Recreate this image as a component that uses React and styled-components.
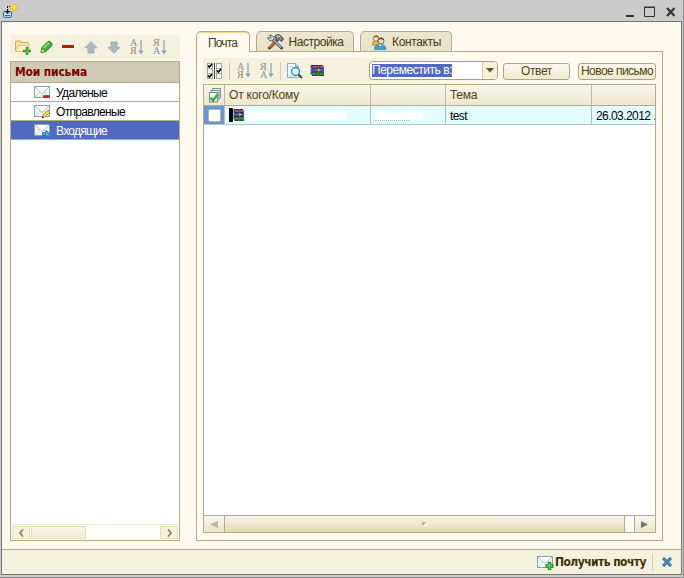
import React from "react";
import styled, { createGlobalStyle } from "styled-components";

const LINE = "#b2ac86";
const CREAM = "#fffaf0";
const BAR = "#f4f1de";

const FOLDERS = [
  { name: "Удаленые", badge: "minus", width: 51 },
  { name: "Отправленые", badge: "pencil", width: 69 },
  { name: "Входящие", badge: "arrow", width: 51, active: true },
];

const TABS = [
  { name: "Почта", width: 54, text: 29, active: true },
  { name: "Настройка", width: 98, text: 55, icon: "tools" },
  { name: "Контакты", width: 92, text: 49, icon: "people" },
];

function Label({ width, children, ...rest }) {
  const ref = React.useRef(null);
  const [spacing, setSpacing] = React.useState(0);

  // spreads the letters so that the caption fills its width
  React.useLayoutEffect(() => {
    const natural = ref.current.getBoundingClientRect().width;
    setSpacing((width - natural) / children.length);
  }, []);

  return (
    <Text ref={ref} style={{ letterSpacing: `${spacing}px` }} {...rest}>
      {children}
    </Text>
  );
}

function AppIcon() {
  return (
    <svg width="16" height="16" viewBox="0 0 16 16">
      <rect x=".5" y="8.500" width="8" height="6" rx="1.500" fill="#b9dcf3" stroke="#2f6c9c" />
      <path d="M2 12.500h5" stroke="#2f6c9c" />
      <path d="M4.500 3v6" stroke="#111" strokeDasharray="2 1" />
      <path d="M4 3.500h4" stroke="#111" strokeDasharray="1 1" />
      <path d="M2 8h5l-2.500 3z" fill="#111" />
      <path d="M11 .5l4 4-4 4-4-4z" fill="#ffd83a" stroke="#d9a51c" strokeWidth=".7" />
    </svg>
  );
}

function FolderIcon() {
  return (
    <svg width="16" height="16" viewBox="0 0 16 16">
      <path d="M.5 12V3q0-1 1-1h3q1 0 1 1v.5h7q1 0 1 1V12z" fill="#f9e5a4" stroke="#d4a951" />
      <path d="M1 12.500l1.800-6h11v6z" fill="#fff1bd" stroke="#dfbd6e" strokeWidth=".8" />
      <path d="M12 8v8M8 12h8" stroke="#2f8a22" strokeWidth="2.600" />
      <path d="M12 8.600v6.800M8.600 12h6.800" stroke="#64c64c" />
    </svg>
  );
}

function PencilIcon() {
  return (
    <svg width="14" height="14" viewBox="0 0 14 14">
      <path d="M1 12.500l1-5L7.500 2q1.500-1.300 3 0l1 1q1.300 1.500 0 3L6 11.500z" fill="#45ad2e" stroke="#23801b" />
      <path d="M3.500 8L9 3" stroke="#a5e68b" strokeWidth="1.600" />
      <path d="M1 12.500l1-4 3 3z" fill="#f0eccc" stroke="#377c28" strokeWidth=".6" />
    </svg>
  );
}

function ArrowIcon({ down }) {
  return (
    <Flip width="14" height="13" viewBox="0 0 14 13" $down={down}>
      <path d="M7 .7l6 6H10V12H4V6.700H1z" fill="#adbac2" stroke="#9fadb6" strokeLinejoin="round" />
    </Flip>
  );
}

function SortIcon({ desc }) {
  return (
    <Sort>
      <Letters>
        <Glyph $red={desc}>{desc ? "Я" : "А"}</Glyph>
        <Glyph $red={!desc}>{desc ? "А" : "Я"}</Glyph>
      </Letters>
      <svg width="6" height="15" viewBox="0 0 6 15">
        <path d="M3 0v13" stroke="#8ba3b3" strokeWidth="1.200" />
        <path d="M.3 10.500h5.400L3 14.500z" fill="#8ba3b3" />
      </svg>
    </Sort>
  );
}

function MailIcon({ badge }) {
  return (
    <svg width="17" height="15" viewBox="0 0 17 15">
      <rect x=".5" y="1.500" width="15" height="11" fill="#f3f9fa" stroke="#88a5a7" />
      <path d="M1 12l5.500-5.500M15 12L9.500 6.500" stroke="#bfd0d3" fill="none" />
      <path d="M1 2l7 6.500L15 2" stroke="#a6bec2" fill="#fff" />
      {badge === "minus" && <path d="M9 11.500h7" stroke="#d51b23" strokeWidth="2.600" />}
      {badge === "pencil" && (
        <g>
          <path d="M8 14l1-3 5-5 2 2-5 5z" fill="#f5d450" stroke="#8b6e24" strokeWidth=".7" />
          <path d="M8 14l.6-2 1.400 1.400z" fill="#222" />
        </g>
      )}
      {badge === "arrow" && (
        <path d="M8.500 9.500H12V7.200l4.500 3.800L12 14.800v-2.300H8.500z" fill="#48a3e5" stroke="#1764a5" strokeWidth=".7" />
      )}
      {badge === "plus" && (
        <g>
          <path d="M12.500 7v8M8.500 11h8" stroke="#168225" strokeWidth="3.400" />
          <path d="M12.500 8v6M9.500 11h6" stroke="#4de35a" strokeWidth="1.500" />
        </g>
      )}
    </svg>
  );
}

function ToolsIcon() {
  return (
    <svg width="17" height="16" viewBox="0 0 17 16">
      <path d="M2.500 14L11 5" stroke="#6b3418" strokeWidth="3" strokeLinecap="round" />
      <path d="M2.500 13.500L11 4.800" stroke="#d6924c" strokeWidth="1.200" />
      <path d="M5 5l9.500 9" stroke="#454b4f" strokeWidth="3" strokeLinecap="round" />
      <path d="M5.500 5l8.500 8.500" stroke="#bcc5c9" strokeWidth="1.200" />
      <path d="M2.500 1l2.500.5 2 2L6 6.500 3 7 .8 4.500 1 3l2 1.500 1.200-1z" fill="#d5dadb" stroke="#444a50" strokeWidth=".8" />
      <path d="M7.500 2.500Q11-1 14 2l2.500 3-2 2.500L12 5.500 10.500 7z" fill="#7b8287" stroke="#2d3135" strokeWidth=".8" />
      <path d="M9.500 2.500q2-1.500 4 .5" stroke="#e5e9eb" fill="none" />
    </svg>
  );
}

function PeopleIcon() {
  return (
    <svg width="16" height="15" viewBox="0 0 16 15">
      <path d="M1 10q0-4 4-4t4 4z" fill="#e7b756" stroke="#b17a2c" strokeWidth=".7" />
      <circle cx="5" cy="3.500" r="2.800" fill="#fae0ba" stroke="#9f6a32" strokeWidth=".8" />
      <path d="M2 3q1-3 4-2.500 2 .5 2 2.500Q5 1.500 2 3z" fill="#9b652c" />
      <path d="M3.500 14.500q-.5-5 5.500-5t6 5z" fill="#479fd0" stroke="#2b7eb2" strokeWidth=".7" />
      <path d="M7.500 9.500l2 2 1.500-2" fill="#fff" />
      <circle cx="10" cy="6" r="3" fill="#fbdfc0" stroke="#654b37" strokeWidth=".8" />
      <path d="M7 5q1-3 4-2.200 2 .5 2 2.700Q10 3.500 7 5z" fill="#4b3c32" />
    </svg>
  );
}

function ChecksIcon() {
  const boxes = [
    [0, 0, true],
    [0, 5, false],
    [0, 10, true],
    [9, 0, false],
    [9, 5, true],
    [9, 10, false],
  ];
  return (
    <svg width="16" height="16" viewBox="0 0 16 16">
      {boxes.map(([x, y, on]) => (
        <g key={`${x}-${y}`}>
          <rect x={x + 0.5} y={y + 0.5} width="5" height="5" fill="#fff" stroke="#a3a39b" />
          {on && <path d={`M${x + 1} ${y + 2.5}l1.500 1.500L${x + 5} ${y + 1}`} stroke="#000" strokeWidth="1.600" fill="none" />}
        </g>
      ))}
      <path d="M7.500 0v16" stroke="#444" />
    </svg>
  );
}

function FindIcon() {
  return (
    <svg width="17" height="16" viewBox="0 0 17 16">
      <path d="M.5.5h8l3 3v11H.5z" fill="#f8fbfe" stroke="#86a9cc" />
      <path d="M8.500.5v3h3" fill="#c6dbec" stroke="#86a9cc" />
      <path d="M2 3.500h4M2 13h3" stroke="#b6cde0" />
      <path d="M11.500 11.500l3.500 3.500" stroke="#38434e" strokeWidth="2" />
      <circle cx="8.500" cy="8.500" r="4" fill="#d5f5ff" stroke="#3487bd" strokeWidth="1.400" />
      <path d="M6.500 8.500q0-2 2-2" stroke="#fff" fill="none" />
    </svg>
  );
}

function BooksIcon({ width = 14, height = 11 }) {
  return (
    <svg width={width} height={height} viewBox="0 0 15 12" preserveAspectRatio="none">
      <path d="M2 0h11l2 2v2H2L0 2z" fill="#8b3185" />
      <path d="M2 4h13v3H2L0 6z" fill="#294cb8" />
      <path d="M2 7h13v4H2L0 9z" fill="#20713f" />
      <path d="M1 .5h12M1 3.500h13M1 7.500h13M2 11.500h13" stroke="#302131" />
      <path d="M3 2h4M11 2h3" stroke="#e06bb2" />
      <path d="M3 5.500h4M11 5.500h3" stroke="#5283e5" />
      <path d="M3 9.500h4M11 9.500h3" stroke="#4bb65c" />
      <path d="M9 0v12" stroke="#8d5a35" strokeWidth="1.500" />
      <path d="M8 5.500h3" stroke="#e5ce78" strokeWidth="1.500" />
    </svg>
  );
}

function StackIcon() {
  return (
    <svg width="12" height="15" viewBox="0 0 12 15">
      <rect x="3.500" y=".5" width="8" height="9" fill="#dceaf0" stroke="#7d97a0" />
      <rect x="2" y="2.500" width="8" height="9" fill="#e6f0f2" stroke="#7d97a0" />
      <rect x=".5" y="4.500" width="8" height="9.500" fill="#eef7ee" stroke="#718b8a" />
      <path d="M1.500 9.500l2.500 3L9 6" stroke="#3fae35" strokeWidth="2.400" fill="none" />
    </svg>
  );
}

function Triangle({ side, color }) {
  const shapes = { left: "M8 0v7L0 3.500z", right: "M0 0v7l7-3.500z", down: "M0 1h8L4 5.500z" };
  return (
    <svg width="8" height="7" viewBox="0 0 8 7">
      <path d={shapes[side]} fill={color} />
    </svg>
  );
}

function Chevron({ right }) {
  return (
    <svg width="5" height="8" viewBox="0 0 5 8">
      <path d={right ? "M1 .5L4 4 1 7.500" : "M4 .5L1 4l3 3.500"} fill="none" stroke="#8f8350" strokeWidth="1.700" />
    </svg>
  );
}

function WindowControls() {
  return (
    <svg width="50" height="12" viewBox="0 0 50 12">
      <path d="M0 10h8" stroke="#333" strokeWidth="2" />
      <path d="M18.500 1.500h10v9h-10zM18 1h11" fill="none" stroke="#333" />
      <path d="M41 2l7.500 8M48.500 2L41 10" stroke="#333" strokeWidth="2.200" />
    </svg>
  );
}

function Sidebar() {
  return (
    <Side>
      <SideTools>
        <FolderIcon />
        <PencilIcon />
        <Minus />
        <ArrowIcon />
        <ArrowIcon down />
        <SortIcon />
        <SortIcon desc />
      </SideTools>
      <Tree>
        <TreeHeader>
          <Label width={72}>Мои письма</Label>
        </TreeHeader>
        {FOLDERS.map(({ name, badge, width, active }) => (
          <Folder key={name} $active={active}>
            <MailIcon badge={badge} />
            <Label width={width} $drop>
              {name}
            </Label>
          </Folder>
        ))}
        <Spacer />
        <SideScroll>
          <SideButton>
            <Chevron />
          </SideButton>
          <SideThumb />
          <Spacer />
          <SideButton>
            <Chevron right />
          </SideButton>
        </SideScroll>
      </Tree>
    </Side>
  );
}

function MailTable() {
  return (
    <Table>
      <Columns $head>
        <Cell $center>
          <StackIcon />
        </Cell>
        <Cell>
          <Label width={70}>От кого/Кому</Label>
        </Cell>
        <Cell />
        <Cell>
          <Label width={27}>Тема</Label>
        </Cell>
        <Cell />
      </Columns>
      <Columns>
        <Cell $center $mark>
          <Checkbox />
        </Cell>
        <Cell>
          <Ink />
          <BooksIcon width={11} height={12} />
          <Smudge $width={102} $gap={2} />
        </Cell>
        <Cell>
          <Smudge $width={50} $dotted />
        </Cell>
        <Cell>
          <Label width={17} $drop>
            test
          </Label>
        </Cell>
        <Cell>
          <Label width={60} $drop>
            26.03.2012 .
          </Label>
        </Cell>
      </Columns>
      <Spacer />
      <TableScroll>
        <ScrollButton>
          <Triangle side="left" color="#b8b5a6" />
        </ScrollButton>
        <Thumb>
          <Grip />
        </Thumb>
        <Track />
        <ScrollButton>
          <Triangle side="right" color="#77756b" />
        </ScrollButton>
      </TableScroll>
    </Table>
  );
}

function App() {
  return (
    <Frame>
      <GlobalStyle />
      <TitleBar>
        <AppIcon />
        <WindowControls />
      </TitleBar>
      <Body>
        <Content>
          <Sidebar />
          <Main>
            <Tabs>
              {TABS.map(({ name, width, text, icon, active }) => (
                <Tab key={name} $width={width} $active={active}>
                  {icon === "tools" && <ToolsIcon />}
                  {icon === "people" && <PeopleIcon />}
                  <Label width={text}>{name}</Label>
                </Tab>
              ))}
            </Tabs>
            <Panel>
              <Toolbar>
                <ToolGroup>
                  <ChecksIcon />
                  <Divider />
                  <SortIcon />
                  <SortIcon desc />
                  <Divider />
                  <FindIcon />
                  <BooksIcon />
                </ToolGroup>
                <Select>
                  <Selected>
                    <Label width={80}>Переместить в:</Label>
                  </Selected>
                  <DropButton>
                    <Triangle side="down" color="#6a5010" />
                  </DropButton>
                </Select>
                <Button $width={67}>
                  <Label width={31}>Ответ</Label>
                </Button>
                <Button $width={78} $gap={8}>
                  <Label width={72}>Новое письмо</Label>
                </Button>
              </Toolbar>
              <MailTable />
            </Panel>
          </Main>
        </Content>
        <Footer>
          <MailIcon badge="plus" />
          <Receive>
            <Label width={91}>Получить почту</Label>
          </Receive>
          <FooterLine />
          <svg width="10" height="10" viewBox="0 0 10 10">
            <path d="M1 1l8 8M9 1L1 9" stroke="#286293" strokeWidth="3" />
            <path d="M1.500 1.500l7 7M8.500 1.500l-7 7" stroke="#5794c3" strokeWidth="1.400" />
          </svg>
        </Footer>
      </Body>
    </Frame>
  );
}

const GlobalStyle = createGlobalStyle`
  * {
    box-sizing: border-box;
  }

  body {
    margin: 0;
    overflow: hidden;
    font-family: "Liberation Sans", Arial, sans-serif;
    font-size: 12px;
    color: #000;
  }

  svg {
    display: block;
    flex: none;
  }
`;

const Text = styled.span`
  display: inline-block;
  flex: none;
  padding-top: ${({ $drop }) => ($drop ? 2 : 0)}px;
  white-space: pre;
  line-height: 14px;
`;

const Spacer = styled.div`
  flex: 1;
`;

const Frame = styled.div`
  display: flex;
  flex-direction: column;
  width: 684px;
  height: 578px;
  padding: 0 1px 2px 1px;
  background: #cbcbcb;
  border-right: 1px solid #8e8e8e;
  border-bottom: 1px solid #8e8e8e;
`;

const TitleBar = styled.div`
  display: flex;
  justify-content: space-between;
  flex: none;
  height: 21px;
  padding: 3px 6px 0 2px;

  svg:last-child {
    margin-top: 3px;
  }
`;

const Body = styled.div`
  display: flex;
  flex-direction: column;
  flex: 1;
  width: 681px;
  background: ${CREAM};
  border: 1px solid #737373;
`;

const Content = styled.div`
  display: flex;
  flex: 1;
  gap: 16px;
  padding: 9px 17px 8px 8px;
`;

const Side = styled.div`
  display: flex;
  flex-direction: column;
  gap: 2px;
  width: 170px;
  padding-top: 4px;
`;

const SideTools = styled.div`
  display: flex;
  align-items: center;
  gap: 9px;
  height: 24px;
  padding-left: 5px;
  background: ${BAR};
`;

const Minus = styled.div`
  width: 12px;
  height: 3px;
  margin: 0 1px 2px -1px;
  background: #b81b0d;
`;

const Flip = styled.svg`
  transform: ${({ $down }) => ($down ? "rotate(180deg)" : "none")};
`;

const Sort = styled.div`
  display: flex;
  align-items: center;
  flex: none;
  width: 14px;
`;

const Letters = styled.div`
  width: 8px;
`;

const Glyph = styled.div`
  height: 8px;
  line-height: 8px;
  font-family: "Liberation Serif", serif;
  font-size: 10px;
  color: ${({ $red }) => ($red ? "#a07d78" : "#7f94a3")};
`;

const Tree = styled.div`
  display: flex;
  flex-direction: column;
  flex: 1;
  background: #fff;
  border: 1px solid ${LINE};
`;

const TreeHeader = styled.div`
  display: flex;
  align-items: center;
  height: 21px;
  padding-left: 4px;
  background: #cfcbb7;
  border-bottom: 1px solid ${LINE};
  color: #800000;
  font-family: "DejaVu Sans Condensed", "DejaVu Sans", sans-serif;
  font-size: 12px;
  font-weight: bold;
`;

const Folder = styled.div`
  display: flex;
  align-items: center;
  gap: 5px;
  height: 19px;
  padding-left: 23px;
  background: ${({ $active }) => ($active ? "#5269c2" : "#fff")};
  border-bottom: 1px solid ${LINE};
  color: ${({ $active }) => ($active ? "#fff" : "#000")};
`;

const SideScroll = styled.div`
  display: flex;
  gap: 1px;
  height: 16px;
  padding: 1px;
  background: #fffefa;
  border-top: 1px solid #eeebd9;
`;

const SideButton = styled.div`
  display: flex;
  align-items: center;
  justify-content: center;
  width: 18px;
  height: 13px;
  background: #f5f2df;
  border: 1px solid #e5dfb9;
`;

const SideThumb = styled.div`
  width: 55px;
  height: 13px;
  background: linear-gradient(#f8f6e7, #f1edd6);
  border: 1px solid #e5dfb9;
`;

const Main = styled.div`
  display: flex;
  flex-direction: column;
  width: 467px;
`;

const Tabs = styled.div`
  display: flex;
  align-items: flex-end;
  gap: 6px;
  height: 20px;
`;

const Tab = styled.div`
  display: flex;
  align-items: center;
  justify-content: center;
  gap: 5px;
  width: ${({ $width }) => $width}px;
  height: ${({ $active }) => ($active ? 21 : 20)}px;
  margin-bottom: ${({ $active }) => ($active ? -1 : 0)}px;
  padding-right: ${({ $active }) => ($active ? 1 : 0)}px;
  padding-top: 1px;
  background: ${({ $active }) => ($active ? CREAM : "linear-gradient(#ebe6d0, #e8e2c9)")};
  border: 1px solid ${LINE};
  border-bottom: 0;
  border-radius: 5px 5px 0 0;
  box-shadow: ${({ $active }) => ($active ? "inset 0 1px #f3d68b" : "none")};
  color: #443a13;
  z-index: 1;
`;

const Panel = styled.div`
  display: flex;
  flex-direction: column;
  flex: 1;
  padding: 6px 6px 7px;
  border: 1px solid ${LINE};
`;

const Toolbar = styled.div`
  display: flex;
  align-items: center;
  width: 453px;
  height: 25px;
  margin-bottom: 1px;
  background: linear-gradient(90deg, ${BAR} 160px, ${CREAM} 300px);
`;

const ToolGroup = styled.div`
  display: flex;
  align-items: center;
  gap: 7px;
  width: 166px;
  padding-left: 4px;

  > :nth-child(2),
  > :nth-child(5),
  > :nth-child(6),
  > :nth-child(7) {
    margin-left: -1px;
  }

  > :nth-child(4) {
    margin-left: 2px;
  }
`;

const Divider = styled.div`
  width: 1px;
  height: 18px;
  background: #d2ccb5;
`;

const Select = styled.div`
  display: flex;
  width: 129px;
  height: 19px;
  background: #fff;
  border: 1px solid #aaa274;
  border-radius: 4px;
  overflow: hidden;
`;

const Selected = styled.div`
  height: 13px;
  margin: 2px auto 0 2px;
  background: #5269c2;
  color: #fff;
  line-height: 13px;

  ${Text} {
    line-height: 13px;
    vertical-align: top;
  }
`;

const DropButton = styled.div`
  display: flex;
  align-items: center;
  justify-content: center;
  width: 15px;
  background: ${BAR};
  border-left: 1px solid #d4cca5;
`;

const Button = styled.button`
  display: flex;
  align-items: center;
  justify-content: center;
  width: ${({ $width }) => $width}px;
  height: 17px;
  margin: 1px 0 0 ${({ $gap = 5 }) => $gap}px;
  padding: 0;
  background: linear-gradient(#faf8ee, #efebd2);
  border: 1px solid #b0a87c;
  border-radius: 3px;
  color: #51430f;
  font: inherit;
`;

const Table = styled.div`
  display: flex;
  flex-direction: column;
  flex: 1;
  width: 453px;
  background: #fff;
  border: 1px solid ${LINE};
`;

const Columns = styled.div`
  display: grid;
  grid-template-columns: 21px 146px 75px 146px 1fr;
  height: ${({ $head }) => ($head ? 21 : 19)}px;
  background: ${({ $head }) => ($head ? "linear-gradient(#f8f6ec, #ede8ce)" : "#e3fdff")};
  border-bottom: 1px solid ${({ $head }) => ($head ? LINE : "#a9c8de")};
  color: ${({ $head }) => ($head ? "#51430f" : "#000")};
`;

const Cell = styled.div`
  display: flex;
  align-items: center;
  justify-content: ${({ $center }) => ($center ? "center" : "flex-start")};
  padding-left: ${({ $center }) => ($center ? 1 : 4)}px;
  background: ${({ $mark }) => ($mark ? "#6d95cf" : "transparent")};
  border-right: 1px solid #b9bdb1;
  overflow: hidden;

  &:last-child {
    border-right: 0;
  }
`;

const Checkbox = styled.div`
  width: 13px;
  height: 13px;
  background: #fff;
  border: 1px solid #b9b49a;
  border-radius: 2px;
`;

const Ink = styled.div`
  width: 4px;
  height: 14px;
  background: #000;
  border-radius: 1px;
`;

const Smudge = styled.div`
  width: ${({ $width }) => $width}px;
  height: 9px;
  margin-left: ${({ $gap = 0 }) => $gap}px;
  background: #fcffff;
  border-radius: 5px;

  /* leftovers of the erased letters */
  &::after {
    content: "";
    display: ${({ $dotted }) => ($dotted ? "block" : "none")};
    width: 34px;
    height: 9px;
    border-bottom: 1px dotted #b5bec2;
  }
`;

const TableScroll = styled.div`
  display: flex;
  height: 17px;
  border-top: 1px solid ${LINE};
`;

const ScrollButton = styled.div`
  display: flex;
  align-items: center;
  justify-content: center;
  width: 20px;
  background: linear-gradient(#faf8ee, #ebe6cb);
`;

const Thumb = styled.div`
  display: flex;
  align-items: center;
  justify-content: center;
  flex: 1;
  background: linear-gradient(#f6f3e2, #efebd1 50%, #ddd7b2);
  border: solid ${LINE};
  border-width: 0 1px;
`;

const Grip = styled.div`
  width: 5px;
  height: 5px;
  background: linear-gradient(135deg, #b9b496 50%, #f4f0dc 50%);
`;

const Track = styled.div`
  width: 10px;
  background: #fffdf6;
  border-right: 1px solid ${LINE};
`;

const Footer = styled.div`
  display: flex;
  align-items: center;
  justify-content: flex-end;
  flex: none;
  height: 25px;
  padding-right: 9px;
  background: ${BAR};
  border-top: 1px solid ${LINE};
`;

const Receive = styled.div`
  margin-left: 1px;
  color: #3d3105;
  font-family: "DejaVu Sans Condensed", "DejaVu Sans", sans-serif;
  font-size: 12px;
  font-weight: bold;
`;

const FooterLine = styled.div`
  width: 1px;
  height: 17px;
  margin: 0 9px 0 6px;
  background: #d4ceb5;
`;

export default App;
